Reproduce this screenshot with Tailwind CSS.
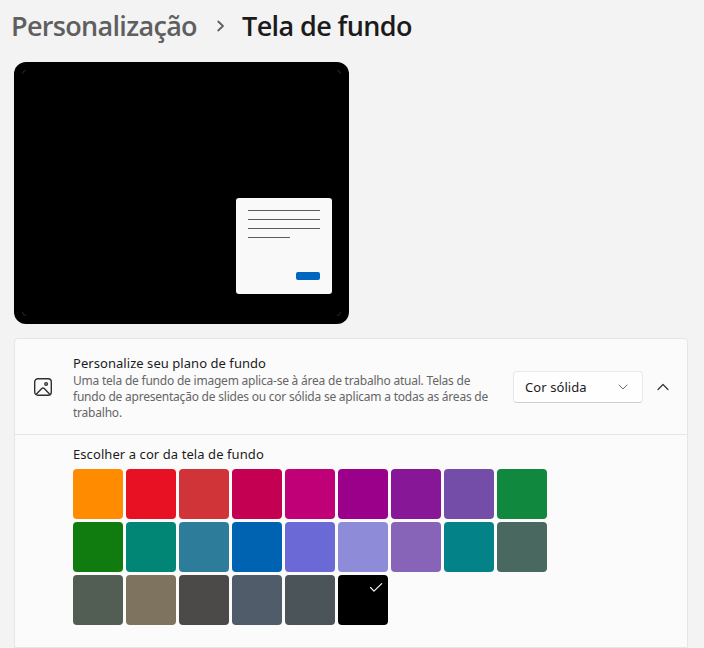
<!DOCTYPE html>
<html lang="pt-BR">
<head>
<meta charset="utf-8">
<title>Tela de fundo</title>
<script src="https://cdn.jsdelivr.net/npm/@tailwindcss/browser@4"></script>
</head>
<body class="h-[648px] w-[704px] overflow-hidden bg-[#f3f3f3] font-['Noto_Sans','Open_Sans',sans-serif] text-[#1b1b1b]">
<nav class="flex h-[62px] items-start pt-[7px] pl-[11px] font-['Open_Sans','Noto_Sans',sans-serif] text-[27px] leading-[38px] font-semibold whitespace-nowrap">
  <span class="w-[205px] tracking-[-0.680px] text-[#5f5f5f]">Personalização</span>
  <svg class="mt-[13px] h-3 w-[10px] shrink-0" viewBox="0 0 10 12" fill="none" stroke="#5f5f5f" stroke-width="1.8" stroke-linecap="round" stroke-linejoin="round"><path d="M2.200 1.500 7 6 2.200 10.500"/></svg>
  <h1 class="ml-4 tracking-[-0.600px]">Tela de fundo</h1>
</nav>

<section class="ml-[14px] h-[262px] w-[335px] rounded-xl bg-black p-2">
  <div class="relative flex h-full items-end justify-end pr-[9px] pb-[22px]">
    <svg class="absolute inset-0 h-full w-full" viewBox="0 0 319 246" fill="none" stroke="#3a3a3a" stroke-width=".7"><path d="M.5 4Q.5 .5 4 .5M315 .5q3.500 0 3.500 3.500M318.500 242q0 3.500-3.500 3.500M4 245.500Q.5 245.500 .5 242"/></svg>
    <div class="relative flex h-24 w-24 flex-col rounded-[3px] bg-[#f9f9f9] px-3 pt-3">
      <div class="mb-2 h-px bg-[#5c5c5c]"></div>
      <div class="mb-2 h-px bg-[#5c5c5c]"></div>
      <div class="mb-2 h-px bg-[#5c5c5c]"></div>
      <div class="h-px w-[42px] bg-[#5c5c5c]"></div>
      <div class="mt-[34px] h-2 w-6 self-end rounded-[2px] bg-[#0067c0]"></div>
    </div>
  </div>
</section>

<section class="mt-[14px] ml-[14px] h-[310px] w-[674px] rounded-t-[4px] border border-[#e5e5e5] bg-[#fbfbfb]">
  <div class="flex h-24 border-b border-[#e5e5e5]">
    <svg class="mt-[39px] ml-[19px] h-[18px] w-[18px] shrink-0" viewBox="0 0 18 18" fill="none" stroke="#303030" stroke-width="1.400" stroke-linejoin="round"><rect x=".7" y=".7" width="16.600" height="16.600" rx="3.200"/><circle cx="12.100" cy="5.900" r="1.300"/><path d="m2.200 16.200 5.600-5.600q1.200-1.100 2.400 0l5.600 5.600"/></svg>
    <div class="ml-[21px] w-[440px] shrink-0 pt-[15px] whitespace-nowrap">
      <h2 class="text-[13px] leading-[19px] tracking-[0.050px]">Personalize seu plano de fundo</h2>
      <p class="text-[12px] leading-4 tracking-[-0.220px] text-[#666]">Uma tela de fundo de imagem aplica-se à área de trabalho atual. Telas de<br>fundo de apresentação de slides ou cor sólida se aplicam a todas as áreas de<br>trabalho.</p>
    </div>
    <button class="mt-8 flex h-8 w-[130px] shrink-0 items-center justify-between rounded-[4px] border border-[#e8e8e8] border-b-[#cfcfcf] bg-[#fefefe] pr-[14px] pl-[11px] text-[13px] tracking-[0.080px] whitespace-nowrap">
      <span class="leading-[18px]">Cor sólida</span>
      <svg class="h-[6px] w-[10px]" viewBox="0 0 10 6" fill="none" stroke="#6b6b6b" stroke-width="1" stroke-linecap="round" stroke-linejoin="round"><path d="m1 1 4 4 4-4"/></svg>
    </button>
    <svg class="mt-[44px] ml-[14px] h-[8px] w-[12px] shrink-0" viewBox="0 0 12 8" fill="none" stroke="#333" stroke-width="1.200" stroke-linecap="round" stroke-linejoin="round"><path d="M1 6.500 6 1.500l5 5"/></svg>
  </div>
  <div class="pt-[10px] pl-[58px]">
    <h3 class="h-6 text-[13px] leading-[19px] tracking-[0.080px] whitespace-nowrap">Escolher a cor da tela de fundo</h3>
    <div class="grid grid-cols-[repeat(9,50px)] gap-[3px] *:h-[50px] *:rounded-[4px]">
      <div class="bg-[#ff8c00]"></div><div class="bg-[#e81123]"></div><div class="bg-[#d13438]"></div><div class="bg-[#c30052]"></div><div class="bg-[#bf0077]"></div><div class="bg-[#9a0089]"></div><div class="bg-[#881798]"></div><div class="bg-[#744da9]"></div><div class="bg-[#10893e]"></div>
      <div class="bg-[#107c10]"></div><div class="bg-[#018574]"></div><div class="bg-[#2d7d9a]"></div><div class="bg-[#0063b1]"></div><div class="bg-[#6b69d6]"></div><div class="bg-[#8e8cd8]"></div><div class="bg-[#8764b8]"></div><div class="bg-[#038387]"></div><div class="bg-[#486860]"></div>
      <div class="bg-[#525e54]"></div><div class="bg-[#7e735f]"></div><div class="bg-[#4c4a48]"></div><div class="bg-[#515c6b]"></div><div class="bg-[#4a5459]"></div>
      <div class="flex items-start justify-end bg-black pt-[7px] pr-[5px]"><svg class="h-[11px] w-[14px]" viewBox="0 0 14 11" fill="none" stroke="#fff" stroke-width="1.100" stroke-linecap="round" stroke-linejoin="round"><path d="m1.500 5.500 3.500 3.700 7.700-7.500"/></svg></div>
    </div>
  </div>
</section>
</body>
</html>
